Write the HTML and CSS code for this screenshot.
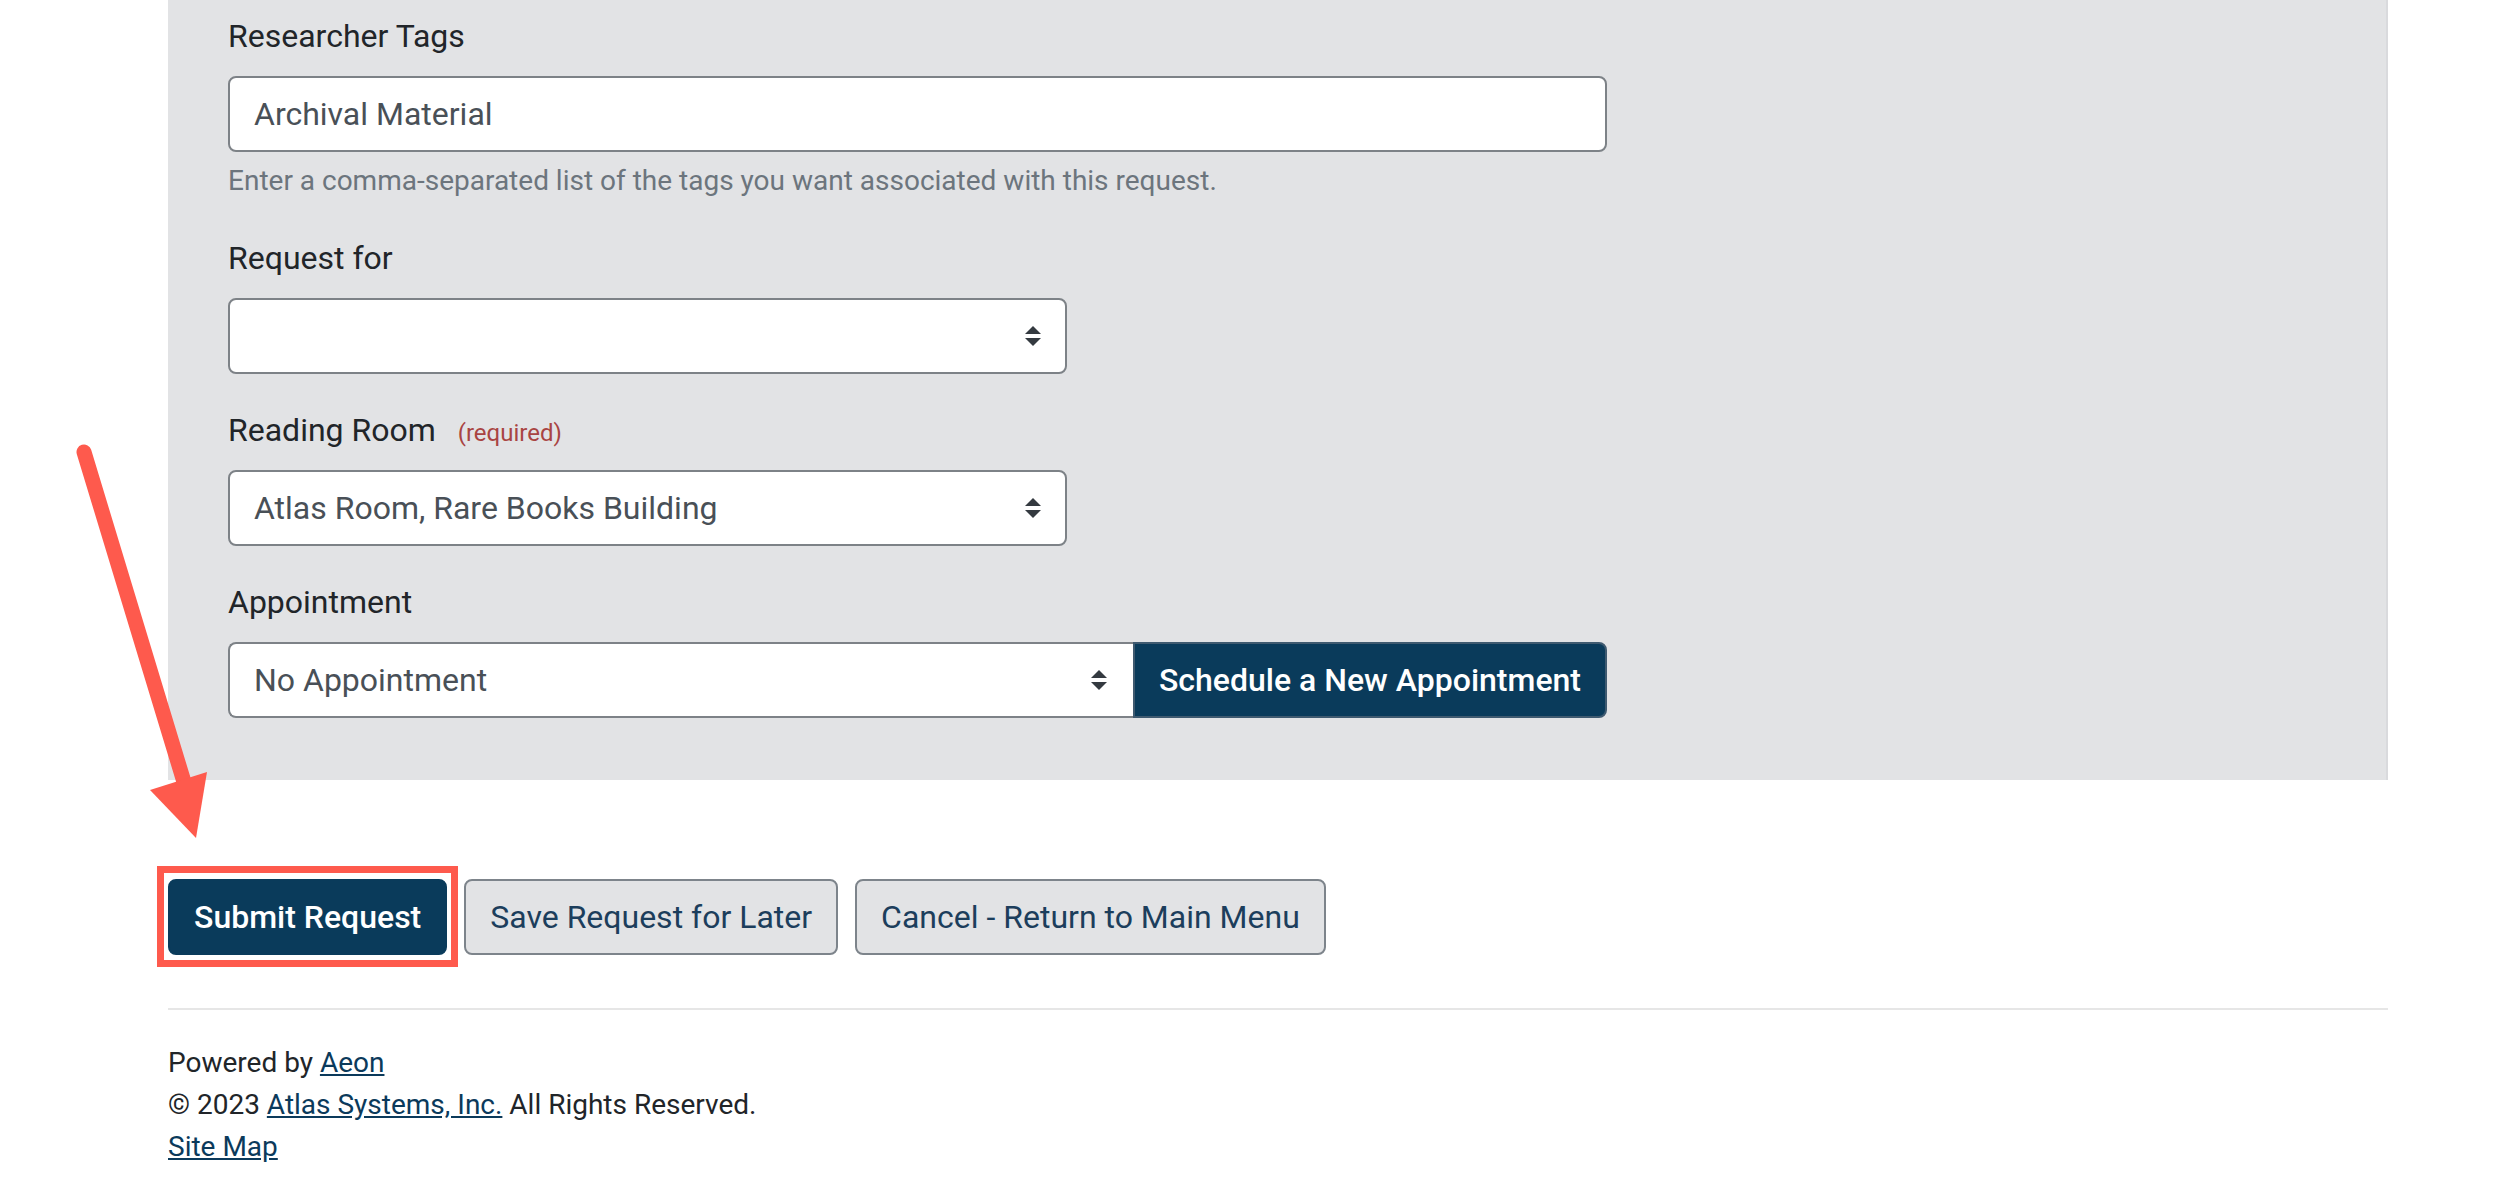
FILE: index.html
```html
<!DOCTYPE html>
<html lang="en">
<head>
  <meta charset="UTF-8">
  <meta name="viewport" content="width=device-width, initial-scale=1.0">
  <title>New Request</title>
  <link rel="stylesheet" href="styles.css">
</head>
<body>
  <div class="wrap">
    <form class="panel">
      <div class="group">
        <label for="tags">Researcher Tags</label>
        <input type="text" id="tags" class="field field-wide" value="Archival Material">
        <small class="help">Enter a comma-separated list of the tags you want associated with this request.</small>
      </div>

      <div class="group">
        <label for="requestFor">Request for</label>
        <div class="select-wrap field-half">
          <select id="requestFor" class="field"><option></option></select>
          <svg class="caret" width="16" height="20" viewBox="0 0 4 5"><path d="M2 0L0 2h4zm0 5L0 3h4z" fill="#343a40"/></svg>
        </div>
      </div>

      <div class="group">
        <label for="room">Reading Room <span class="req">(required)</span></label>
        <div class="select-wrap field-half">
          <select id="room" class="field"><option>Atlas Room, Rare Books Building</option></select>
          <svg class="caret" width="16" height="20" viewBox="0 0 4 5"><path d="M2 0L0 2h4zm0 5L0 3h4z" fill="#343a40"/></svg>
        </div>
      </div>

      <div class="group last">
        <label for="appt">Appointment</label>
        <div class="input-group field-wide">
          <div class="select-wrap grow">
            <select id="appt" class="field joined"><option>No Appointment</option></select>
            <svg class="caret" width="16" height="20" viewBox="0 0 4 5"><path d="M2 0L0 2h4zm0 5L0 3h4z" fill="#343a40"/></svg>
          </div>
          <button type="button" class="btn btn-dark btn-append">Schedule a New Appointment</button>
        </div>
      </div>
    </form>

    <div class="actions">
      <div class="highlight-wrap">
        <button type="button" class="btn btn-dark">Submit Request</button>
        <span class="highlight"></span>
      </div>
      <button type="button" class="btn btn-light">Save Request for Later</button>
      <button type="button" class="btn btn-light">Cancel - Return to Main Menu</button>
    </div>

    <hr>

    <footer class="footer">
      <div>Powered by <a href="#">Aeon</a></div>
      <div>&copy; 2023 <a href="#">Atlas Systems, Inc.</a> All Rights Reserved.</div>
      <div><a href="#">Site Map</a></div>
    </footer>
  </div>

  <!-- annotation arrow -->
  <svg class="arrow" width="260" height="900" viewBox="0 0 260 900">
    <line x1="84" y1="452" x2="184" y2="782" stroke="#fe5a4d" stroke-width="15" stroke-linecap="round"/>
    <polygon points="150,790 207,772 196,838" fill="#fe5a4d"/>
  </svg>
</body>
</html>
```

FILE: styles.css
```css
body {
  margin: 0;
  font-family: Roboto, "Liberation Sans", Arial, sans-serif;
  font-size: 32px;
  line-height: 1.5;
  color: #212529;
  background: #fff;
}
.wrap {
  margin-left: 168px;
  width: 2220px;
}
.panel {
  background: #e2e3e5;
  border-right: 2px solid #d9dadd;
  padding: 12px 60px 62px;
}
.group {
  margin-bottom: 32px;
}
.group.last {
  margin-bottom: 0;
}
label {
  display: block;
  margin-bottom: 16px;
}
.req {
  font-size: 24px;
  color: #a94442;
  margin-left: 14px;
}
.field {
  display: block;
  box-sizing: border-box;
  width: 100%;
  height: 76px;
  padding: 12px 24px;
  font-family: inherit;
  font-size: 32px;
  line-height: 1.5;
  color: #495057;
  background: #fff;
  border: 2px solid #7d8287;
  border-radius: 8px;
  outline: none;
}
select.field {
  -webkit-appearance: none;
  appearance: none;
  padding-right: 64px;
}
.field-wide {
  width: 1379px;
}
.field-half {
  width: 839px;
}
.help {
  display: block;
  margin-top: 8px;
  font-size: 28px;
  color: #6c757d;
}
.select-wrap {
  position: relative;
}
.caret {
  position: absolute;
  right: 26px;
  top: 28px;
  pointer-events: none;
}
.input-group {
  display: flex;
}
.grow {
  flex: 1;
}
.joined {
  border-radius: 8px 0 0 8px;
  border-right: none;
}
.btn {
  box-sizing: border-box;
  height: 76px;
  padding: 12px 24px;
  font-family: inherit;
  font-size: 32px;
  line-height: 1.5;
  border-radius: 8px;
  cursor: pointer;
}
.btn-dark {
  background: #0a3b5b;
  color: #fff;
  font-weight: 500;
  border: 2px solid #0a3b5b;
}
.btn-append {
  border-radius: 0 8px 8px 0;
  border-color: #3f5a70;
}
.btn-light {
  background: #e2e3e5;
  color: #1c3e5c;
  border: 2px solid #7d848b;
}
.actions {
  display: flex;
  gap: 17px;
  margin-top: 99px;
}
.highlight-wrap {
  position: relative;
}
.highlight {
  position: absolute;
  top: -13px;
  bottom: -12px;
  left: -11px;
  right: -11px;
  border: 7px solid #fe5a4d;
  pointer-events: none;
}
hr {
  margin: 53px 0 0;
  border: 0;
  border-top: 2px solid #e6e6e6;
}
.footer {
  padding-top: 32px;
  font-size: 28px;
  line-height: 42px;
}
.footer a {
  color: #0b3a5b;
  text-decoration: underline;
}
.arrow {
  position: absolute;
  left: 0;
  top: 0;
  pointer-events: none;
}
```
